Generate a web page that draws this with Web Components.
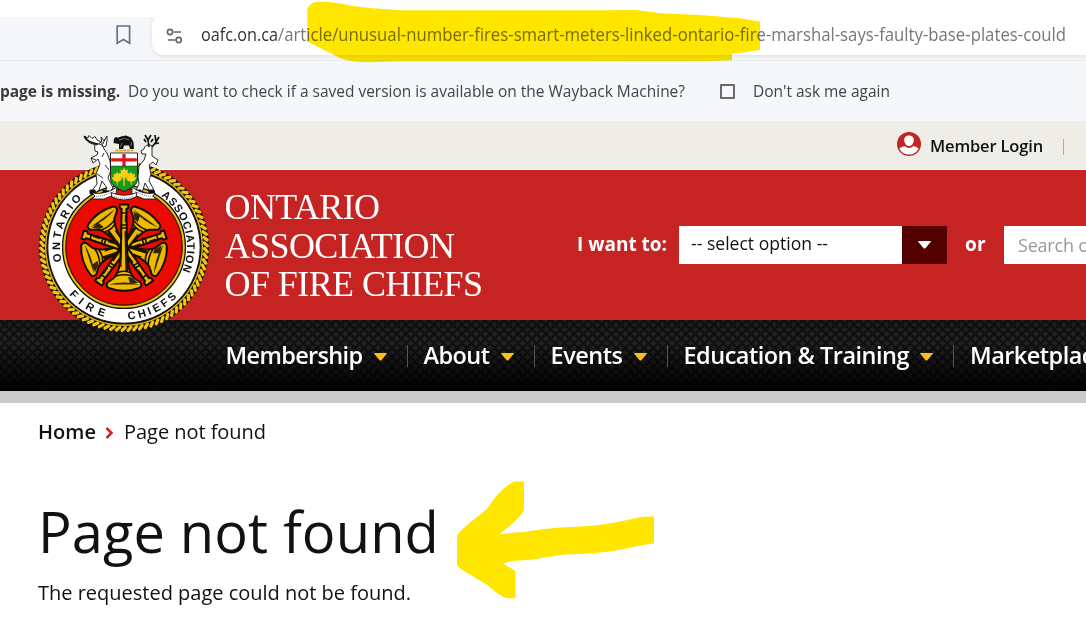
<!DOCTYPE html>
<html lang="en">
<head>
<meta charset="utf-8">
<title>Page not found</title>
<style>
html,body{margin:0;height:100%;overflow:hidden;background:#fff}
body{position:relative;font-family:"Open Sans","Noto Sans",sans-serif;color:#111}
</style>
</head>
<body>
<page-shell>
  <browser-bar></browser-bar>
  <wayback-bar></wayback-bar>
  <site-header></site-header>
  <page-content></page-content>
  <marker-strokes></marker-strokes>
</page-shell>
<script>
function define(name, html, extra) {
  const t = document.createElement('template');
  t.innerHTML = html;
  customElements.define(name, class extends HTMLElement {
    connectedCallback() {
      if (this.shadowRoot) return;
      this.attachShadow({mode: 'open'}).append(t.content.cloneNode(true));
      if (extra) extra.call(this, this.shadowRoot);
    }
  });
}

/* A single line of text fitted to the given width: by its tracking, or, with "squeeze", by its glyph width. */
define('fit-text', `<style>:host{display:block;white-space:nowrap;flex:none}span{display:inline-block;transform-origin:0 50%}</style><span><slot></slot></span>`,
  function (root) {
    const s = root.querySelector('span'), w = +this.getAttribute('w');
    const n = this.textContent.length, now = s.getBoundingClientRect().width;
    this.style.width = w + 'px';
    if (this.hasAttribute('squeeze')) s.style.transform = 'scaleX(' + w / now + ')';
    else s.style.letterSpacing = ((w - now) / n) + 'px';
  });

define('page-shell', `<style>:host{display:flex;flex-direction:column;width:1086px;height:628px;overflow:hidden;position:relative;background:#fff;isolation:isolate}</style><slot></slot>`);

define('browser-bar', `<style>
:host{display:block;height:61px;box-sizing:border-box;padding-top:17px;flex:none}
.bar{height:44px;box-sizing:border-box;background:#f4f6f9;border-bottom:1px solid #e8eaee;display:flex;overflow:hidden;align-items:flex-start}
.mark{margin:8px 0 0 116px;width:15px;height:20px;flex:none}
.box{margin:-3px 0 0 21px;flex:1;height:41px;background:#fff;border-radius:12px 0 0 12px;box-shadow:0 1px 4px #0000001c;display:flex;align-items:center;padding:3px 0 0 14px;box-sizing:border-box}
.tune{width:17px;height:17px;flex:none;margin-right:18px}
fit-text{font-size:18.5px;line-height:36px;margin-top:-4px;color:#75777b}
.d{color:#303236}
</style><div class="bar">
<svg class="mark" viewBox="0 0 15 20" fill="none" stroke="#667085" stroke-width="1.7"><path d="M1.2 1h12.4v17.2L7.5 14.6 1.2 18.2z"/></svg>
<div class="box"><svg class="tune" viewBox="0 0 17 17" fill="none" stroke="#62656b" stroke-width="1.6"><circle cx="4" cy="4" r="2.6"/><path d="M7.5 4H15M2 12h7.5"/><circle cx="12.7" cy="12" r="2.6"/></svg>
<fit-text squeeze class="d" w="77">oafc.on.ca</fit-text><fit-text squeeze w="788">/article/unusual-number-fires-smart-meters-linked-ontario-fire-marshal-says-faulty-base-plates-could</fit-text></div></div>`);

define('wayback-bar', `<style>
:host{display:flex;height:60px;flex:none;background:#f5f7f9;align-items:center;color:#42434f;font-size:16px;line-height:60px}
.q{font-size:15.8px;margin-left:8px}
i{width:11px;height:11px;border:2px solid #69696f;border-radius:1px;margin:0 18px 0 35px;flex:none}
.n{font-size:15.8px}
</style><fit-text w="120" style="font-weight:700;font-size:15.5px;color:#3b3b3d">page is missing.</fit-text><fit-text squeeze class="q" w="557">Do you want to check if a saved version is available on the Wayback Machine?</fit-text><i></i><fit-text squeeze class="n" w="137">Don't ask me again</fit-text>`);

define('oafc-crest', `<style>:host{display:block}svg{display:block;width:172px;height:202px}text{font:700 11px "Liberation Sans",sans-serif;fill:#111}</style>
<svg viewBox="38 132 172 202">
<defs>
<g id="horn" stroke-linejoin="round">
<path d="M-4.3-43.5H4.3V-40L2.4-39 2.6-26 3 -5 3.600 10C4 19 6 25 9.500 29.500L16.500 34.500C18.500 38 16.5 40 13.5 40.5 6 43.5-6 43.5-13.5 40.5-16.5 40-18.5 38-16.500 34.500L-9.500 29.500C-6 25-4 19-3.600 10L-3-5-2.600-26-2.400-39-4.300-40Z" fill="#efb900" stroke="#140c00" stroke-width="2"/>
<path d="M-3.3-35H3.3M-3.5-23H3.5M-3.6-20H3.6M-6 24.500Q0 22 6 24.500M-8 28Q0 25.5 8 28" stroke="#140c00" stroke-width="1.6" fill="none"/>
<path d="M.8-33H2.2V-26H.8ZM.5-17L2.500-17 3.500 10 5 22 1.500 24ZM-2.500-14L-1.800-14-2.600 20-4 18Z" fill="#201400"/>
<path d="M4 29L8 29.500 14 35 6 35.500ZM-15.5 36.500Q0 32.5 15.5 36.500" fill="#201400" fill-opacity=".9"/>
</g>
<path id="left" d="M61.7 261.5A64 64 0 0 1 92 191.6"/>
<path id="right" d="M161 196A63 63 0 0 1 178.6 278.5"/>
<path id="bl" d="M69 294.4A72.6 72.6 0 0 0 124 319.6"/>
<path id="br" d="M128.1 319.5A72.6 72.6 0 0 0 183.5 288.6"/>
</defs>
<circle cx="124" cy="247" r="85" fill="#120e02"/>
<g id="rope" stroke="#f0c414" stroke-width="3.2" stroke-linecap="round"></g>
<circle cx="124" cy="247" r="78.3" stroke="#dfb51d" stroke-width="1.4" fill="none"/>
<circle cx="124" cy="247" r="76.2" fill="#fff" stroke="#111"/>
<circle cx="124" cy="247" r="61.4" fill="#e9bd15" stroke="#111" stroke-width="1.3"/>
<circle cx="124" cy="247" r="58.2" fill="#eb0a00" stroke="#2b1600" stroke-width="1.2"/>
<text><textPath href="#left" textLength="69">ONTARIO</textPath></text>
<text><textPath href="#right" textLength="84">ASSOCIATION</textPath></text>
<text><textPath href="#bl" textLength="42">FIRE</textPath></text>
<text><textPath href="#br" textLength="55">CHIEFS</textPath></text>
<g transform="translate(124 248)">
<use href="#horn" transform="rotate(72)"/><use href="#horn" transform="rotate(288)"/><use href="#horn" transform="rotate(144)"/><use href="#horn" transform="rotate(216)"/><use href="#horn"/></g>
<!-- supporters -->
<g stroke="#141414" stroke-width=".9" stroke-linejoin="round">
<path fill="#fff" d="M94.5 146C97 142 103 144 104 149L107 153 110 161 111 170 108 178 113 188 108 194 104 193 107 188 102 181 99 190 95 193 91 192 97 184 96 174 100 164 98 159 93 163 91 158 97 155 98 152 95 151Z"/>
<path d="M97 145C91 144 86 142 84 136L88 138 89 135.5 92 138.500 95 136.500 97 140 101 142ZM102 144L101 137 104 141 107 136 107 140.500 106 146 103 147Z" fill="#fff"/>
<path fill="none" d="M91 158L96 160M104 153L102 157M105 165L109 170M97 174L103 178M105 139L103 144"/>
<path fill="none" stroke-width="1.6" d="M84.500 136.500Q88 143 98 144"/>
<path d="M90 190l5 0 1 4-6 0zM103 190l6 1 1 3-7 0z" fill="#111"/>
<path fill="#fff" d="M152 146C149 143 144 146 144 149L141 151 142 154 146 154 144 160 139 166 138 177 139 184 136 190 138 194 142 193 145 183 149 190 149 194 154 194 153 188 149 181 151 174 149 165 153 162 156 165 158 160 152 156Z"/>
<path fill="none" stroke-width="1.7" d="M149 147L148 140 145 135M148 140L151 135M152 147L156 142 159 137M156 142L155 135M154 144L159 143M146 142L144 139M151 142L153 139"/>
<path d="M136 190h5l1 4h-7zM149 190h5l1 4h-6z" fill="#111"/>
<path d="M92 193Q106 195 117 187L116 194 104 199 92 199 95 196ZM155 193Q142 195 132 187L132 194 144 199 156 199 153 196Z" fill="#fff"/>
<path d="M111 192.500Q124 198 137 192.500L136 197Q124 203 112 197Z" fill="#fff"/>
<path d="M110.500 153H137.500V178C137.500 186 131 188 124 191.500 117 188 110.500 186 110.500 178Z" fill="#159b20"/>
</g>
<path d="M111 153.500H137V166H111z" fill="#fff"/>
<path d="M111.200 159.800H136.800M124 154V166" stroke="#dc1620" stroke-width="3.200"/>
<path d="M111 166H137" stroke="#222" stroke-width=".5"/>
<g fill="#ffcf16"><path id="leaf" d="M124 167.500l1.700 3 2.200-1-.4 4 2.600-.7-2.400 4-3 1v3h-1v-3l-3-1-2.400-4 2.600.7-.4-4 2.200 1z"/>
<use href="#leaf" transform="translate(-7 4)"/><use href="#leaf" transform="translate(7 4)"/><path d="M123.400 177h1.200v9h-1.200z"/></g>
<path d="M113.500 143L114 138.500 116 137 118 137.800 121 136.500 126 135.500 131 137.500 133.500 142 134 149H130L129 145.500 124 145.500 123 149H119L119 144 116 143.500Z" fill="#111"/>
<path d="M119 140Q125 137 129 140M131.500 142L131 146M122 143L120.500 147" stroke="#999" stroke-width=".7" fill="none"/>
<path d="M115.500 150.500H133" stroke="#dda900" stroke-width="2.200" stroke-dasharray="3 .8"/>
<g fill="none" stroke="#555" stroke-width=".9" stroke-dasharray="1 1"><path d="M96 196.500Q107 195.500 114 191M153 196.500Q142 195.500 134 191M114 196.500Q124 200 134 196.500"/></g>
</svg>`, function (root) {
  /* Twisted rope: short slanted strands round the rim. */
  let strands = '';
  for (let i = 0; i < 90; i++) strands += `<path d="M122.600 166.600L125.800 163.600" transform="rotate(${i * 4} 124 247)"/>`;
  root.getElementById('rope').innerHTML = strands;
});

define('caret-down', `<style>:host{display:block;flex:none}svg{display:block}</style><svg width="13" height="8" viewBox="0 0 13 8"><path d="M.6 0H12.4Q13.4.2 12.6 1L7.4 7.2Q6.5 8 5.6 7.2L.4 1Q-.4.2.6 0z" fill="currentColor"/></svg>`);

define('nav-item', `<style>:host{display:flex;align-items:center;height:71px;flex:none}
fit-text{font-weight:600;font-size:23.5px;line-height:70px;color:#fff;margin-top:-2px}
caret-down{color:#fdc011;margin:2px 0 0 11px}
i{width:1px;height:22px;background:#555;margin:1px 16px 0 20px}
:host([last]) caret-down,:host([last]) i{display:none}</style><slot></slot>`,
function (root) {
  const f = document.createElement('fit-text');
  f.setAttribute('w', this.getAttribute('w'));
  f.textContent = this.getAttribute('label');
  root.querySelector('slot').replaceWith(f, document.createElement('caret-down'), document.createElement('i'));
});

define('main-nav', `<style>
:host{display:block;height:71px;position:relative;background:#111;overflow:hidden}
.bg{position:absolute;inset:0;width:100%;height:100%}
nav{position:relative;display:flex;padding-left:225.500px}
</style>
<svg class="bg"><defs><pattern id="p" width="9.333" height="9.333" patternUnits="userSpaceOnUse"><rect width="9.333" height="9.333" fill="#292929"/><path d="M-1-1L10.333 10.333M-1 10.333L10.333-1" stroke="#121212" stroke-width="2.300" fill="none"/></pattern>
<linearGradient id="g" x2="0" y2="1"><stop offset="0" stop-color="#000" stop-opacity=".3"/><stop offset=".3" stop-color="#000" stop-opacity=".12"/><stop offset=".95" stop-color="#000" stop-opacity=".93"/></linearGradient></defs>
<rect width="100%" height="100%" fill="url(#p)"/><rect width="100%" height="100%" fill="url(#g)"/></svg>
<nav><nav-item label="Membership" w="137"></nav-item><nav-item label="About" w="66"></nav-item><nav-item label="Events" w="72"></nav-item><nav-item label="Education &amp; Training" w="225.500"></nav-item><nav-item label="Marketplace" w="136" last></nav-item></nav>`);

define('site-header', `<style>
:host{display:block;position:relative;flex:none;height:282px}
.top{height:48px;background:#eeede8;border-bottom:1px solid #fff;display:flex;align-items:center;padding-left:897px;box-sizing:content-box}
.top svg{margin:-2px 9px 0 0;flex:none}
.top fit-text{font-size:16.5px;font-weight:600;line-height:48px;color:#111;margin-top:1px}
.top i{width:1px;height:16px;background:#aaa;margin:4px 0 0 20px}
.red{height:150px;background:#c52422;display:flex;color:#fff}
.brand{margin:18px 0 0 224.500px;width:352.500px;font:36px/38.5px "Liberation Serif",serif;flex:none}
.red .row{display:flex;height:38px;margin-top:56px;line-height:36px;flex:none}
.lab{font-weight:700;font-size:19px}
.sel{width:223px;background:#fff;color:#111;margin-left:12px;padding-left:12px;box-sizing:border-box;font-size:18px;line-height:35px}
.btn{width:45px;background:#500;display:flex;align-items:center;justify-content:center}
.search{background:#fff;width:160px;margin-left:18px;padding-left:14px;box-sizing:border-box;color:#999;font-size:18px;line-height:38px}
.grey{height:12px;background:#cbcbcb}
oafc-crest{position:absolute;left:38px;top:11px}
</style>
<div class="top"><svg width="24" height="24" viewBox="0 0 24 24"><circle cx="12" cy="12" r="12" fill="#c62323"/><path d="M2.300 16.500Q4.500 14.500 7.500 14Q12 18 16.500 14Q19.500 14.500 21.700 16.500A10.800 10.800 0 0 1 2.300 16.500z" fill="#fff"/><path d="M12 3.600C15.600 3.600 17 6 16.800 8.500 16.500 12 14.500 14 12 14S7.500 12 7.200 8.500C7 6 8.400 3.600 12 3.600z" fill="#fff"/></svg><fit-text w="113">Member Login</fit-text><i></i></div>
<div class="red"><div class="brand"><fit-text w="155">ONTARIO</fit-text><fit-text w="230">ASSOCIATION</fit-text><fit-text w="258">OF FIRE CHIEFS</fit-text></div>
<div class="row"><fit-text class="lab" w="90">I want to:</fit-text><div class="sel"><fit-text squeeze w="137">-- select option --</fit-text></div><div class="btn"><caret-down></caret-down></div><fit-text class="lab" w="21" style="margin-left:18px">or</fit-text><div class="search"><fit-text w="122">Search our site</fit-text></div></div></div>
<main-nav></main-nav><div class="grey"></div><oafc-crest></oafc-crest>`);

define('page-content', `<style>
:host{display:block;padding:0 38px;color:#111}
.crumb{display:flex;align-items:center;height:28px;margin-top:15px;font-size:20px;line-height:28px}
svg{margin:1px 10px 0 9px;flex:none}
h1{margin:43px 0 0;font-weight:400;font-size:56px;line-height:84px;height:84px}
p{margin:6px 0 0;font-size:20px;line-height:28px}
</style>
<div class="crumb"><fit-text w="58" style="font-weight:600">Home</fit-text><svg width="9" height="12" viewBox="0 0 9 12"><path d="M1.500 1L6.500 6 1.500 11" stroke="#d22226" stroke-width="2.500" fill="none"/></svg><fit-text w="142">Page not found</fit-text></div>
<h1><fit-text w="401">Page not found</fit-text></h1><p><fit-text w="373">The requested page could not be found.</fit-text></p>`);

define('marker-strokes', `<style>:host{position:absolute;inset:0;mix-blend-mode:multiply;pointer-events:none}svg{display:block}</style>
<svg width="1086" height="628" fill="#ffe600"><path d="M307.3 9Q310 3 316 2Q331 1 350 5.5Q372 8.5 400 10.2L600 10.3 636 10 660 13.2 700 15 740 18.3 760 21.5V50L732 54V60.3L710 61 400 61.2 370 62.3Q352 62.5 340 58L307.3 41.5Z"/>
<path d="M524 481.5V510.5Q517 520 510 525.5L499 534.5Q503 533.3 524 532Q548 527.5 590 526Q610 524 641 517Q647 516.2 654 516.5V543.5Q646 544 624 549Q604 553.3 571 554.3Q556 555 538 558.7L524 560.3Q511 560.5 503 563.5L515.5 571V598.3H507Q499 596 488 585.5L469 574Q458 568 457 565V536Q458 532 472 521L487 509Q499 489.5 514 481.5Z"/></svg>`);
</script>
</body>
</html>
